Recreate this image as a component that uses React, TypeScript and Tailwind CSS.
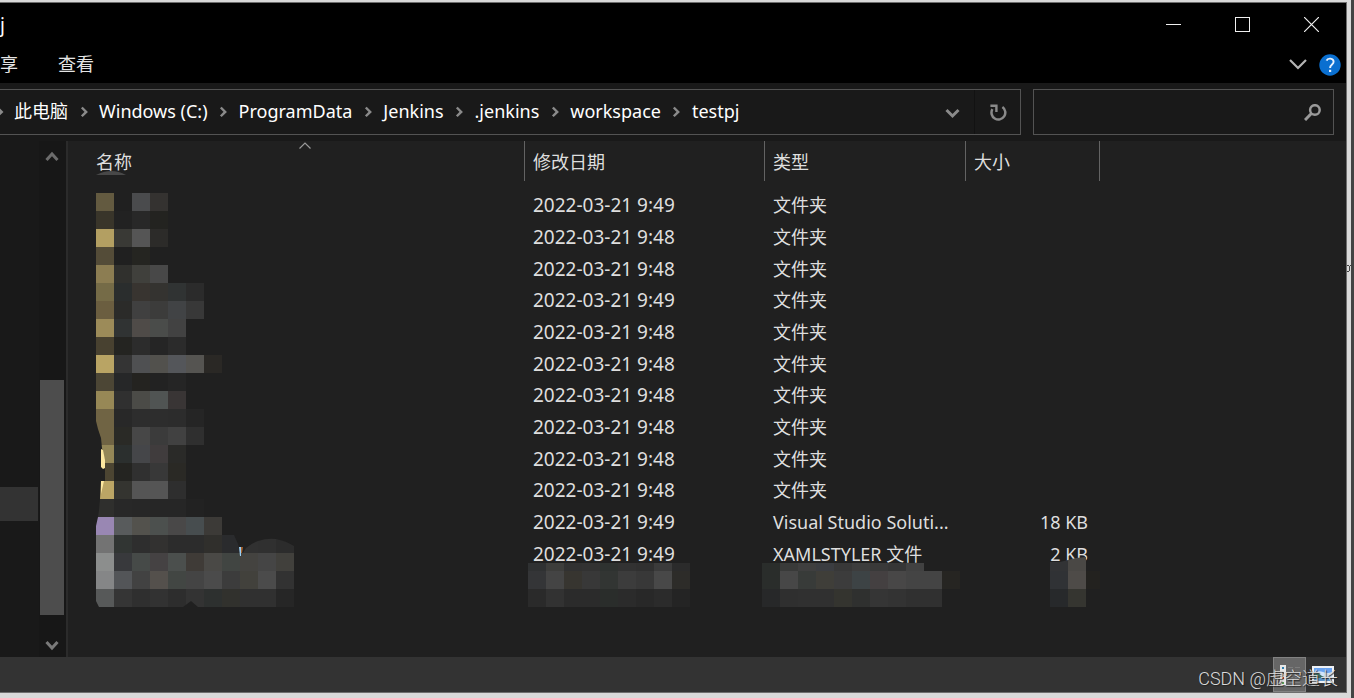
import React, { Fragment } from "react";

type Block = { x: number; y: number; h: number; colors: string[] };

const CELL = 18;

const nameRows: string[][] = [
  ["#635a40", "", "#4a4b4d", "#343230"],
  ["#39352a", "#222222", "#282828", "#232320"],
  ["#b39f62", "#393935", "#555555", "#2c2b29"],
  ["#544c38", "", "#252521"],
  ["#8c7d52", "#30302d", "#40403c", "#484848"],
  ["#756b47", "#2a2d2d", "#383430", "#343330", "#303333", "#2b2b2b"],
  ["#6b5e40", "#2b2b29", "#404040", "#3c3c3b", "#414345", "#383838"],
  ["#9c8b59", "#303333", "#4f4b48", "#4a4c4a", "#424242"],
  ["#484130", "#242421", "#2c2c2c", "#252525", "#2b2b2b"],
  ["#b9a464", "#343434", "#4f5052", "#52514d", "#54565a", "#555451", "#2a2825"],
  ["#4c4635", "#262728", "#242320", "#222222", "#252525"],
  ["#978856", "#303030", "#4b4b47", "#505453", "#393535"],
  ["#706444", "#282828", "#2d2d2d", "#2d2d2d", "#2c2c2c", "#252525"],
  ["#706444", "#2a2a26", "#474747", "#3b3b3b", "#414141", "#2f2f2f"],
  ["#948757", "#2b2f2e", "#454649", "#403c3d", "#2a2a28"],
  ["#4c4532", "#242421", "#303030", "#383838", "#2a2925"],
  ["#bba565", "#343430", "#555555", "#555555", "#2e2e2e"],
  ["#2f2f2d", "#282828", "#272727", "#262626", "#262626", "#222222"],
  ["#9987b3", "#585b5c", "#53524d", "#4c504e", "#494848", "#474d4f", "#3c3a37"],
  ["#737373", "#313533", "#2e2e2e", "#323130", "#2c2c2c", "#2c2c2c", "#302f2c"],
  ["#8c8e8d", "#38393c", "#464a48", "#454243", "#4b4f4d", "#3f3b37", "#4a4946", "#414542", "#444340", "#454545", "#41403c"],
  ["#858687", "#535558", "#424242", "#54504c", "#424643", "#444444", "#4b4b4b", "#3c3c3c", "#42413c", "#4b4b4b", "#323232"],
  ["#575959", "#353535", "#2f2f2f", "#323232", "#2d2d2d", "#333333", "#2d302f", "#31312d", "#303030", "#303030", "#262626"],
];

const blocks: Block[] = [
  ...nameRows.map((colors, i) => ({ x: 96, y: 193 + i * CELL, h: CELL, colors })),
  { x: 528, y: 563, h: 8, colors: ["#2f3132", "#3d3d3b", "#313131", "#323232", "#2e3230", "#323232", "#303030", "#3b3b3b", "#2b2b2b"] },
  { x: 528, y: 571, h: 18, colors: ["#343537", "#444444", "#373530", "#383838", "#323533", "#3c3c3c", "#383838", "#484848", "#2d2c29"] },
  { x: 528, y: 589, h: 18, colors: ["#2a2a2a", "#323232", "#2b2b2b", "#2b2b2b", "#2a2d2b", "#2b2b2b", "#282828", "#2b2b2b", "#242424"] },
  { x: 762, y: 563, h: 8, colors: ["#2a2d2b", "#393a39", "#3f3f3f", "#3b3d41", "#383838", "#3d3d3d", "#393939", "#363636", "#414141"] },
  { x: 762, y: 571, h: 18, colors: ["#2a2d2b", "#474747", "#383b39", "#3f3e39", "#3c3c3c", "#3d4345", "#444041", "#484747", "#444444", "#444444", "#262522"] },
  { x: 762, y: 589, h: 18, colors: ["#272829", "#2f2f2f", "#303030", "#303030", "#34342f", "#2f302f", "#353535", "#333333", "#303030", "#303030"] },
  { x: 1050, y: 571, h: 18, colors: ["#303235", "#4e4b48", "#23221f"] },
  { x: 1050, y: 589, h: 18, colors: ["#27292b", "#353530"] },
];

function Mosaic() {
  return (
    <svg
      className="pointer-events-none absolute left-0 top-0"
      width="1032"
      height="476"
      viewBox="68 141 1032 476"
      aria-hidden="true"
    >
      <g shapeRendering="crispEdges">
        {blocks.map((b) => (
          <Fragment key={`${b.x}-${b.y}`}>
            {b.colors.map((c, i) =>
              c ? <rect key={i} x={b.x + i * CELL} y={b.y} width={CELL} height={b.h} fill={c} /> : null,
            )}
          </Fragment>
        ))}
      </g>
      <path d="M96 175 Q104 171 111 171 Q119 171 126 175 Z" fill="#484848" />
      <path d="M96 421 L98 429 L101 438 L102 448 L105 462 L105 481 L101 481 L100 499 L99 510 L98 517 L96 526 L94 526 L94 421 Z" fill="#202020" />
      <path d="M101 449 L103 450 L105 460 L105 468 L103 469 L101 467 Z" fill="#fde8a0" />
      <path d="M101 481 H104 L101 494 Z" fill="#fde8a0" />
      <path d="M222 535 H234 L238 544 L240 553 H222 Z" fill="#2a2b2d" />
      <path d="M243 553 L246 548 Q252 543 258 541 V553 Z" fill="#313131" />
      <path d="M258 541 Q267 538 276 539 V553 H258 Z" fill="#303030" />
      <path d="M276 539 Q286 541 294 546 V553 H276 Z" fill="#2c2c2c" />
      <path d="M239 547 H241 V556 H240 Z" fill="#9bd0f5" />
      <path d="M241 547 H243 L242 553 H241 Z" fill="#a8622c" />
      <path d="M96 601 L99 607 H96 Z M183 607 L191 601 L198 607 Z" fill="#202020" />
      <path d="M1050 562 H1060 L1068 560 V571 H1050 Z" fill="#323335" />
      <path d="M1068 560 L1076 558 L1086 557 V571 H1068 Z" fill="#4a4845" />
    </svg>
  );
}

function Chevron({ d, size, color, width = 2 }: { d: string; size: number; color: string; width?: number }) {
  return (
    <svg width={size} height={size} viewBox="0 0 16 16" fill="none" stroke={color} strokeWidth={width} aria-hidden="true">
      <path d={d} />
    </svg>
  );
}

const crumbs = ["此电脑", "Windows (C:)", "ProgramData", "Jenkins", ".jenkins", "workspace", "testpj"];

const files = [
  ["2022-03-21 9:49", "文件夹", ""],
  ["2022-03-21 9:48", "文件夹", ""],
  ["2022-03-21 9:48", "文件夹", ""],
  ["2022-03-21 9:49", "文件夹", ""],
  ["2022-03-21 9:48", "文件夹", ""],
  ["2022-03-21 9:48", "文件夹", ""],
  ["2022-03-21 9:48", "文件夹", ""],
  ["2022-03-21 9:48", "文件夹", ""],
  ["2022-03-21 9:48", "文件夹", ""],
  ["2022-03-21 9:48", "文件夹", ""],
  ["2022-03-21 9:49", "Visual Studio Soluti...", "18 KB"],
  ["2022-03-21 9:49", "XAMLSTYLER 文件", "2 KB"],
];

function TitleBar() {
  return (
    <header className="bg-black">
      <div className="flex h-[43px] items-center">
        <h1 className="flex-1 text-[19px] leading-6 text-white">j</h1>
        <button aria-label="最小化" className="flex h-full w-[69px] items-center justify-center">
          <svg width="15" height="15" viewBox="0 0 15 15" stroke="#f0f0f0" aria-hidden="true">
            <path d="M0 7.5H15" />
          </svg>
        </button>
        <button aria-label="最大化" className="flex h-full w-[69px] items-center justify-center">
          <svg width="15" height="15" viewBox="0 0 15 15" fill="none" stroke="#f0f0f0" aria-hidden="true">
            <rect x=".5" y=".5" width="14" height="14" />
          </svg>
        </button>
        <button aria-label="关闭" className="flex h-full w-[69px] items-center justify-center">
          <svg width="15" height="15" viewBox="0 0 15 15" stroke="#f0f0f0" strokeWidth="1.2" aria-hidden="true">
            <path d="M0 0L15 15M15 0L0 15" />
          </svg>
        </button>
      </div>
      <nav className="flex h-[37px] items-center pr-[5px]">
        <div className="flex flex-1 gap-10 text-[18px]">
          <button>享</button>
          <button>查看</button>
        </div>
        <div className="flex items-center gap-[11px]">
          <button aria-label="展开功能区">
            <svg width="20" height="12" viewBox="0 0 20 12" fill="none" stroke="#b4b4b4" strokeWidth="2.2" aria-hidden="true">
              <path d="M2 1L10 9L18 1" />
            </svg>
          </button>
          <button aria-label="帮助">
            <svg width="22" height="22" viewBox="0 0 22 22" fill="none" aria-hidden="true">
              <circle cx="11" cy="11" r="10.7" fill="#0a6fd0" />
              <path d="M7.6 6.6C8.6 3.8 14.6 3.8 14.6 7.8C14.6 10.6 11.1 10.4 11.1 14" stroke="#e8f2ff" strokeWidth="1.9" />
              <rect x="10" y="15.8" width="2.2" height="2.2" fill="#e8f2ff" />
            </svg>
          </button>
        </div>
      </nav>
    </header>
  );
}

function AddressBar() {
  return (
    <div className="flex h-[58px] gap-3 bg-[#191919] pb-1.5 pr-3 pt-1.5">
      <div className="flex h-[46px] min-w-0 flex-1 items-center border-y border-r border-[#535353]">
        <ol className="flex flex-1 items-center pb-0.5 text-[18px] text-white">
          {crumbs.map((c, i) => (
            <li key={c} className="flex items-center">
              <span className={i === 0 ? "flex w-[14px] justify-start" : "flex w-[31px] justify-center"}>
                <Chevron d={i === 0 ? "M-3 4L2 9L-3 14" : "M5.5 4L10.5 9L5.5 14"} size={14} color="#8a8a8a" width={2.8} />
              </span>
              <a href="#" className="whitespace-nowrap">
                {c}
              </a>
            </li>
          ))}
        </ol>
        <button aria-label="历史记录" className="flex h-full w-[45px] items-center justify-center border-r border-[#121212]">
          <Chevron d="M2.5 6L8.5 12L14.5 6" size={16} color="#8a8a8a" width={3} />
        </button>
        <button aria-label="刷新" className="flex h-full w-[45px] items-center justify-center">
          <svg width="18" height="18" viewBox="0 0 18 18" fill="none" stroke="#8a8a8a" strokeWidth="2.5" aria-hidden="true">
            <path d="M13.4 4A6.9 6.9 0 1 1 3.4 6.2" />
            <path d="M1.4 2.8H7.4V9" strokeWidth="2.4" />
          </svg>
        </button>
      </div>
      <label className="flex h-[46px] w-[301px] items-center border border-[#535353] pr-3">
        <input type="search" aria-label="搜索" className="min-w-0 flex-1 bg-transparent px-3 text-[18px] outline-none" />
        <svg width="17" height="17" viewBox="0 0 17 17" fill="none" stroke="#999999" aria-hidden="true">
          <circle cx="10.9" cy="6" r="4.8" strokeWidth="2.5" />
          <path d="M7.6 9.2L1 16" strokeWidth="3" />
        </svg>
      </label>
    </div>
  );
}

function Heading({ children }: { children: React.ReactNode }) {
  return (
    <th scope="col" className="h-12 p-0 align-top font-normal">
      <div className="flex h-10 items-center border-r border-[#636363] pl-2 pt-0.5">{children}</div>
    </th>
  );
}

function FileTable() {
  return (
    <table className="w-full table-fixed border-collapse text-left text-[18px] leading-6 text-[#dedede]">
      <colgroup>
        <col className="w-[457px]" />
        <col className="w-[240px]" />
        <col className="w-[201px]" />
        <col className="w-[134px]" />
        <col />
      </colgroup>
      <thead>
        <tr>
          <th scope="col" className="h-12 p-0 pl-[18px] align-top font-normal">
            <div className="relative flex h-10 items-center border-r border-[#636363] pl-2.5 pt-0.5">
              名称
              <span className="absolute inset-x-0 top-0 flex justify-center">
                <svg width="12" height="10" viewBox="0 0 12 10" fill="none" stroke="#9a9a9a" strokeWidth="1.2" aria-hidden="true">
                  <path d="M.5 7.5L6 2L11.5 7.5" />
                </svg>
              </span>
            </div>
          </th>
          <Heading>修改日期</Heading>
          <Heading>类型</Heading>
          <Heading>大小</Heading>
          <td />
        </tr>
      </thead>
      <tbody>
        {files.map(([date, kind, size], i) => (
          <tr key={i} className={i % 3 === 2 ? "h-[31px]" : "h-8"}>
            <td className="p-0" />
            <td className="whitespace-nowrap py-0 pl-2 pr-0 text-[19px]">{date}</td>
            <td className="whitespace-nowrap py-0 pl-2 pr-0">{kind}</td>
            <td className="whitespace-nowrap py-0 pl-0 pr-3 text-right">{size}</td>
            <td className="p-0" />
          </tr>
        ))}
      </tbody>
    </table>
  );
}

function Sidebar() {
  return (
    <aside className="flex w-[68px] shrink-0 border-r-2 border-[#2b2b2b] bg-[#171717]">
      <div className="w-[39px] bg-[#191919] pt-[346px]">
        <div className="h-[34px] w-[38px] bg-[#333333]" />
      </div>
      <div className="flex w-[25px] flex-col items-center pb-1 pt-2">
        <Chevron d="M2.5 11L8 5L13.5 11" size={16} color="#6c6c6c" width={3} />
        <div className="mb-[22px] mt-auto h-[235px] w-6 bg-[#4d4d4d]" />
        <Chevron d="M2.5 5L8 11L13.5 5" size={16} color="#7a7a7a" width={3} />
      </div>
    </aside>
  );
}

function StatusBar() {
  return (
    <footer className="relative flex h-[35px] justify-end gap-1.5 bg-[#333333] pr-3">
      <button aria-label="详细信息" className="flex h-full w-[33px] items-center justify-center border border-[#828282] bg-[#666666]">
        <svg width="22" height="22" viewBox="0 0 22 22" aria-hidden="true">
          <rect x="1" y="1" width="6" height="20" fill="#e6e6e6" />
          <rect x="3" y="3" width="2" height="2" fill="#2f7fb0" />
          <rect x="3" y="8" width="2" height="2" fill="#555555" />
          <rect x="3" y="13" width="2" height="2" fill="#c0392b" />
          <rect x="3" y="18" width="2" height="2" fill="#5b9a55" />
          <path d="M9 3.5H14M16 3.5H21M9 8.5H14M16 8.5H21M9 13.5H14M16 13.5H21M9 18.5H14M16 18.5H21" stroke="#7c7c7c" />
        </svg>
      </button>
      <button aria-label="大图标" className="flex h-full items-center">
        <svg width="22" height="17" viewBox="0 0 22 17" aria-hidden="true">
          <rect width="22" height="17" fill="#eef1f5" />
          <rect x="2" y="2" width="18" height="13" fill="#69a2f0" />
          <path d="M2 7Q6 4 11 6T20 6V11H2Z" fill="#cfe4fa" />
          <path d="M2 8L6 7L10 10L15 12H2Z" fill="#3a6b62" />
          <path d="M2 12H20V15H2Z" fill="#5b93c9" />
        </svg>
      </button>
      <p className="absolute right-2 top-2.5 whitespace-nowrap font-['Roboto','Noto_Sans_CJK_SC',sans-serif] text-[18px] font-light leading-6 text-[#dadada] [text-shadow:1px_1px_1px_#222222]">
        CSDN @虚空道长
      </p>
    </footer>
  );
}

export default function App() {
  return (
    <div className="flex min-h-screen bg-[#d9d9d9] font-['Noto_Sans','Noto_Sans_CJK_SC',sans-serif] text-[#e4e4e4]">
      <div className="flex flex-1 flex-col pb-[5px] pt-0.5">
        <div className="flex flex-1 flex-col border-b border-r border-t border-[#6e6e6e] bg-[#202020]">
          <TitleBar />
          <AddressBar />
          <div className="flex flex-1">
            <Sidebar />
            <main className="relative min-w-0 flex-1">
              <FileTable />
              <Mosaic />
            </main>
          </div>
          <StatusBar />
        </div>
      </div>
      <div className="flex w-1 items-start pt-[265px]">
        <svg width="4" height="7" viewBox="0 0 4 7" fill="none" stroke="#444444" aria-hidden="true">
          <path d="M0 .5H2M0 6.5H2M2.5 1V6M4 .5H3" />
        </svg>
      </div>
      <div className="w-[3px] bg-[#444444]" />
    </div>
  );
}
